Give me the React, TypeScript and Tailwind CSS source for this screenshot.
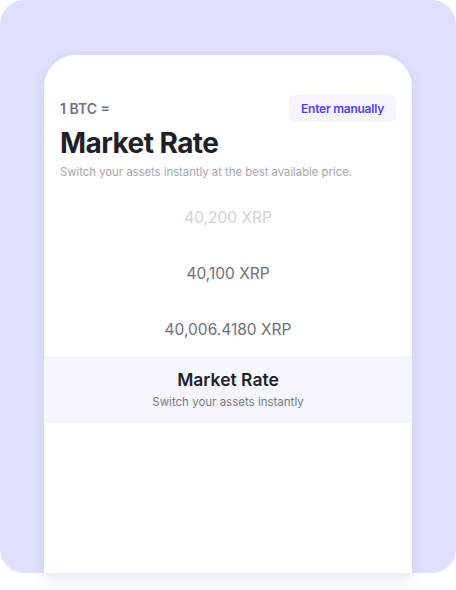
import React from "react";

const rates = [
    { label: "40,200 XRP", faded: true },
    { label: "40,100 XRP", faded: false },
    { label: "40,006.4180 XRP", faded: false },
];

const App: React.FC = () => {
    return (
        <div className="w-[456px] h-[590px] bg-white font-['Inter',sans-serif]">
            <div className="h-[573px] rounded-[24px] bg-[#dfe1fc] pt-[55px] px-[44px] flex flex-col">
                <div className="flex-1 bg-white rounded-t-[32px] shadow-[0_6px_16px_rgba(60,70,140,0.12)] flex flex-col">
                    {/* Header */}
                    <div className="pt-[40px] px-4">
                        <div className="flex items-center justify-between h-[27px]">
                            <span className="text-[14px] font-semibold text-[#73737e]">1 BTC =</span>
                            <button className="h-[27px] w-[107px] rounded-md bg-[#f5f5ff] text-[12px] tracking-[-0.02em] font-semibold text-[#5a3df5]">
                                Enter manually
                            </button>
                        </div>
                        <h1 className="mt-[3px] text-[28px] leading-[36px] tracking-[-0.02em] font-bold text-[#1e1f2b]">
                            Market Rate
                        </h1>
                        <p className="mt-[3px] text-[11.3px] leading-[16px] text-[#a6a6ae]">
                            Switch your assets instantly at the best available price.
                        </p>
                    </div>

                    {/* Rate picker */}
                    <div className="mt-[8px] flex flex-col">
                        {rates.map((rate) => (
                            <div
                                key={rate.label}
                                className={`h-[56px] pt-[4px] flex items-center justify-center text-[15.5px] ${
                                    rate.faded ? "text-[#d3d3d6]" : "text-[#6f6f78]"
                                }`}
                            >
                                {rate.label}
                            </div>
                        ))}
                        <div className="h-[67px] bg-[#f6f6fe] flex flex-col items-center justify-center">
                            <span className="text-[17.5px] leading-[22px] font-semibold text-[#1e1f2b]">Market Rate</span>
                            <span className="mt-[3px] text-[11.5px] leading-[16px] text-[#7a7a84]">
                                Switch your assets instantly
                            </span>
                        </div>
                    </div>
                </div>
            </div>
        </div>
    );
};

export default App;
